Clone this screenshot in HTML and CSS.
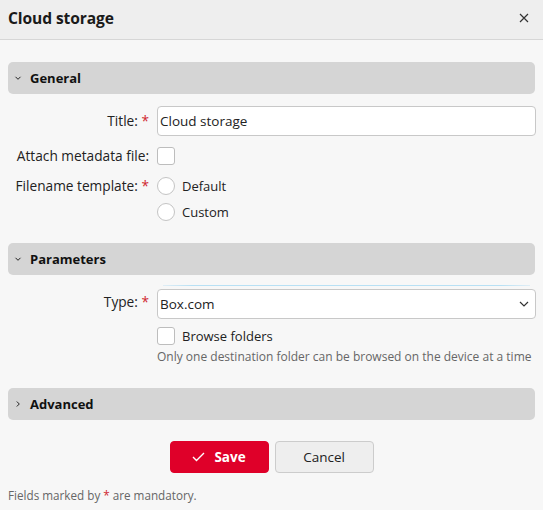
FILE: index.html
```html
<!DOCTYPE html>
<html>
<head>
<meta charset="utf-8">
<link rel="stylesheet" href="styles.css">
</head>
<body>
<div class="dialog">
  <header class="dlg-head">
    <h1 class="dlg-title">Cloud storage</h1>
    <button class="close" aria-label="Close">
      <svg width="10" height="10" viewBox="0 0 10 10"><path d="M1 1L9 9M9 1L1 9" stroke="#333" stroke-width="1.2" fill="none"/></svg>
    </button>
  </header>
  <main class="dlg-body">
    <section class="section">
      <div class="section-head">
        <svg class="chev" width="8" height="8" viewBox="0 0 8 8"><path d="M1.5 2.8L4 5.3L6.5 2.8" stroke="#222" stroke-width="1" fill="none"/></svg>
        <span>General</span>
      </div>
      <div class="form">
        <div class="row row-title">
          <label class="lbl">Title: <span class="req">*</span></label>
          <div class="ctl"><input class="input" type="text" value="Cloud storage"></div>
        </div>
        <div class="row row-meta">
          <label class="lbl">Attach metadata file:</label>
          <div class="ctl"><span class="box"></span></div>
        </div>
        <div class="row row-tpl">
          <label class="lbl">Filename template: <span class="req">*</span></label>
          <div class="ctl radios">
            <div class="opt"><span class="radio"></span><span>Default</span></div>
            <div class="opt"><span class="radio"></span><span>Custom</span></div>
          </div>
        </div>
      </div>
    </section>
    <section class="section sec-params">
      <div class="section-head">
        <svg class="chev" width="8" height="8" viewBox="0 0 8 8"><path d="M1.5 2.8L4 5.3L6.5 2.8" stroke="#222" stroke-width="1" fill="none"/></svg>
        <span>Parameters</span>
      </div>
      <div class="form">
        <div class="row row-type">
          <label class="lbl">Type: <span class="req">*</span></label>
          <div class="ctl col">
            <div class="glow"></div>
            <div class="select">
              <span>Box.com</span>
              <svg width="10" height="6" viewBox="0 0 10 6"><path d="M1 1L5 5L9 1" stroke="#333" stroke-width="1.2" fill="none"/></svg>
            </div>
            <div class="opt check-opt"><span class="box"></span><span>Browse folders</span></div>
            <div class="help">Only one destination folder can be browsed on the device at a time</div>
          </div>
        </div>
      </div>
    </section>
    <section class="section sec-adv">
      <div class="section-head">
        <svg class="chev" width="8" height="8" viewBox="0 0 8 8"><path d="M2.8 1.5L5.3 4L2.8 6.5" stroke="#222" stroke-width="1" fill="none"/></svg>
        <span>Advanced</span>
      </div>
    </section>
    <div class="actions">
      <button class="btn btn-save">
        <svg width="13" height="10" viewBox="0 0 13 10"><path d="M1 5L4.5 8.5L12 1" stroke="#fff" stroke-width="1.4" fill="none"/></svg>
        <span>Save</span>
      </button>
      <button class="btn btn-cancel">Cancel</button>
    </div>
    <p class="note">Fields marked by <span class="req">*</span> are mandatory.</p>
  </main>
</div>
</body>
</html>
```
FILE: styles.css
```css
* { box-sizing: border-box; }
html, body { margin: 0; padding: 0; }
body {
  font-family: "Open Sans", "Noto Sans", sans-serif;
  font-size: 13px;
  color: #222;
  background: #f7f7f7;
}
.dialog { width: 543px; height: 510px; background: #f7f7f7; overflow: hidden; }
.dlg-head {
  height: 40px;
  background: #eeeeee;
  border-bottom: 1px solid #d6d6d6;
  display: flex;
  align-items: center;
  justify-content: space-between;
  padding: 0 14px 0 8px;
}
.dlg-title { margin: 0 0 3px 0; font-size: 15.6px; font-weight: 700; color: #1a1a1a; letter-spacing: -0.1px; }
.close { border: 0; background: none; padding: 0; display: flex; cursor: pointer; margin-top: -4px; }
.dlg-body { padding: 22px 8px 0 8px; }
.section-head {
  height: 32px;
  background: #d5d5d5;
  border-radius: 5px;
  display: flex;
  align-items: center;
  gap: 8px;
  padding-left: 6px;
  font-weight: 700;
  color: #111;
}
.chev { flex: none; }
.form { padding-top: 12px; }
.row { display: grid; grid-template-columns: 141px 1fr; column-gap: 8px; align-items: start; }
.lbl { text-align: right; white-space: nowrap; color: #222; font-size: 13.7px; }
.ctl { display: flex; }
.ctl.col, .ctl.radios { flex-direction: column; }
.req { color: #d0262f; }
.input {
  width: 379px; height: 30px;
  border: 1px solid #c8c8c8; border-radius: 4px;
  background: #fff; padding: 0 2px;
  font: inherit; font-size: 13.5px; color: #222;
}
.row-title .lbl { line-height: 30px; }
.row-meta { margin-top: 11px; }
.row-meta .lbl { line-height: 18px; }
.box {
  display: block; width: 18px; height: 18px;
  border: 1px solid #bdbdbd; border-radius: 3px; background: #fff; flex: none;
}
.row-tpl { margin-top: 12px; }
.row-tpl .lbl { line-height: 18px; }
.radios { gap: 8px; }
.opt { display: flex; align-items: center; gap: 7px; height: 18px; }
.radio {
  width: 18px; height: 18px; border-radius: 50%;
  border: 1px solid #c4c4c4; background: #fff; flex: none;
}
.sec-params { margin-top: 22px; }
.sec-params .form { padding-top: 10px; }
.glow {
  height: 1px; margin: 0 6px 3px 6px;
  background: linear-gradient(90deg, rgba(170,215,240,0.3), #b8e0f4 8%, #b8e0f4 92%, rgba(170,215,240,0.3));
}
.row-type .lbl { margin-top: 2px; line-height: 30px; }
.select {
  width: 379px; height: 30px;
  border: 1px solid #c8c8c8; border-radius: 4px; background: #fff;
  display: flex; align-items: center; justify-content: space-between;
  padding: 0 6px 0 2px; font-size: 13.5px;
}
.check-opt { margin-top: 8px; }
.help { margin-top: 3px; color: #666; font-size: 12px; white-space: nowrap; }
.sec-adv { margin-top: 23px; }
.actions { display: flex; justify-content: center; gap: 6px; margin-top: 21px; }
.btn {
  width: 99px; height: 32px; border-radius: 4px;
  font: inherit; font-size: 13.5px; cursor: pointer;
  display: flex; align-items: center; justify-content: center; gap: 9px;
}
.btn-save { background: #df0029; border: 1px solid #df0029; color: #fff; font-weight: 700; }
.btn-cancel { background: #eeeeee; border: 1px solid #cccccc; color: #222; }
.note { margin: 14px 0 0 0; color: #666; font-size: 11.7px; }
```
